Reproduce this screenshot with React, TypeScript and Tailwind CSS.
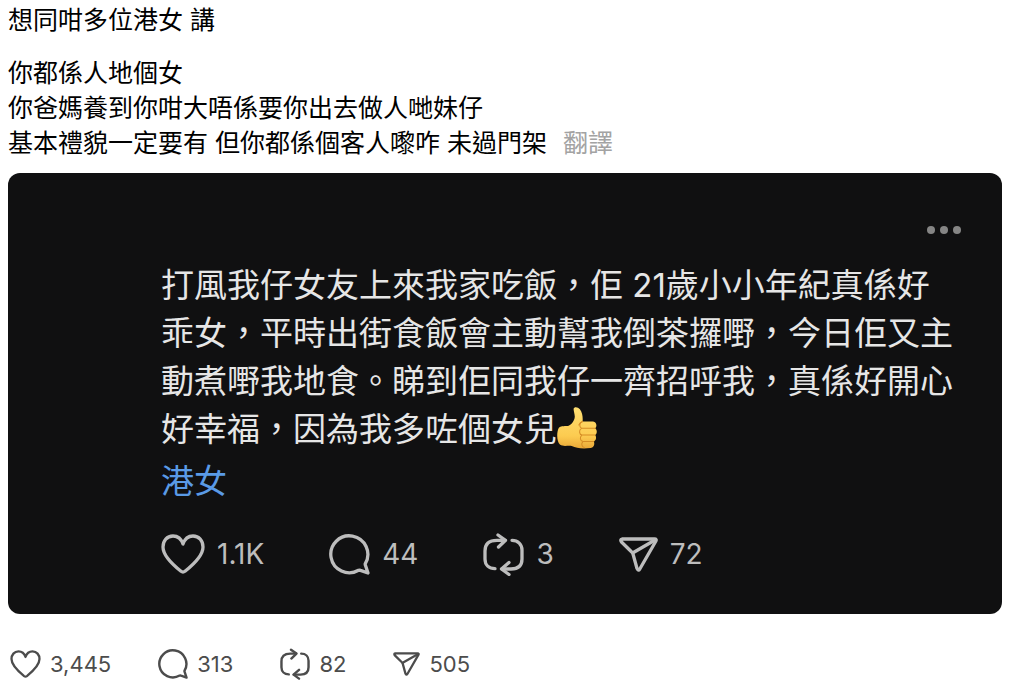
import type { ReactNode } from 'react';
import { clsx } from 'clsx';

type IconName = 'heart' | 'comment' | 'repost' | 'send';

interface Stat {
  icon: IconName;
  label: string;
  value: string;
}

const quotedStats: Stat[] = [
  { icon: 'heart', label: '讚好', value: '1.1K' },
  { icon: 'comment', label: '回覆', value: '44' },
  { icon: 'repost', label: '轉發', value: '3' },
  { icon: 'send', label: '分享', value: '72' },
];

const postStats: Stat[] = [
  { icon: 'heart', label: '讚好', value: '3,445' },
  { icon: 'comment', label: '回覆', value: '313' },
  { icon: 'repost', label: '轉發', value: '82' },
  { icon: 'send', label: '分享', value: '505' },
];

const icons: Record<IconName, { viewBox: string; shape: ReactNode }> = {
  heart: {
    viewBox: '0 0 44 40',
    shape: (
      <path d="M22 10C20.300 5 16.500 2 12 2C6 2 2 6.800 2 13C2 21 9 28.500 20 37.300Q22 38.800 24 37.300C35 28.500 42 21 42 13C42 6.800 38 2 32 2C27.500 2 23.700 5 22 10Z" />
    ),
  },
  comment: {
    viewBox: '0 0 41 41',
    shape: (
      <path d="M36.300 29.600A18.500 18.500 0 1 0 29.600 36.300Q30.500 36 31.500 36.400L39 39L36.500 31.500Q36 30.500 36.300 29.600Z" />
    ),
  },
  repost: {
    viewBox: '0 0 41 43',
    shape: (
      <>
        <path d="M22 7.300H14C6 7.300 2 11 2 18V26C2 32 6 35.700 12 35.700" />
        <path d="M15 2L22.500 7.300L15.500 14" />
        <path d="M29 7.300C35 7.300 39 11.500 39 17V26C39 32.500 35 36 28 36H19" />
        <path d="M26 29.500L18.500 36L26 41.500" />
      </>
    ),
  },
  send: {
    viewBox: '0 0 39 35',
    shape: (
      <>
        <path d="M3 2H35.500Q38 2 36.800 4.200L20.800 32Q19.200 34.500 18 31.500L14 17Q13.700 15.800 12.700 15L2.500 5Q.800 2.400 3 2Z" />
        <path d="M14 15.800L36.500 2.800" />
      </>
    ),
  },
};

function Icon({ name, className }: { name: IconName; className: string }) {
  const { viewBox, shape } = icons[name];
  return (
    <svg
      viewBox={viewBox}
      className={className}
      fill="none"
      stroke="currentColor"
      strokeWidth="3.300"
      strokeLinecap="round"
      strokeLinejoin="round"
      aria-hidden="true"
    >
      {shape}
    </svg>
  );
}

function StatBar({ stats, large }: { stats: Stat[]; large?: boolean }) {
  return (
    <div className={clsx('flex items-center', large ? 'gap-[65px] text-[#bdbdbd]' : 'gap-[47px] pl-0.5 text-[#4c4c4c]')}>
      {stats.map((stat) => (
        <button
          key={stat.icon}
          type="button"
          aria-label={`${stat.label} ${stat.value}`}
          className={clsx('flex items-center', large ? 'gap-3 text-[28px] leading-11' : 'gap-[9px] text-[22px] leading-8')}
        >
          <Icon name={stat.icon} className={large ? iconSizeLarge[stat.icon] : iconSize[stat.icon]} />
          {stat.value}
        </button>
      ))}
    </div>
  );
}

const iconSizeLarge: Record<IconName, string> = {
  heart: 'h-10 w-11',
  comment: 'h-[41px] w-[41px]',
  repost: 'h-[43px] w-[41px]',
  send: 'h-[35px] w-[39px]',
};

const iconSize: Record<IconName, string> = {
  heart: 'h-7 w-[31px]',
  comment: 'h-[30px] w-[30px]',
  repost: 'h-8 w-[30px]',
  send: 'h-6 w-[27px]',
};

function ThumbsUp() {
  return (
    <svg viewBox="0 0 117 124" className="inline-block h-[42px] w-10 align-[-8px]" role="img" aria-label="讚">
      <defs>
        <linearGradient id="skin" x1="0" y1="0" x2="0" y2="1">
          <stop offset="0" stopColor="#ffdf72" />
          <stop offset=".7" stopColor="#fccb50" />
          <stop offset="1" stopColor="#e9a838" />
        </linearGradient>
      </defs>
      <path
        fill="url(#skin)"
        d="M5 61C13 54 24 57 34 55C44 51 51 40 52 29C52 20 47 9 49 4C52-2 62 0 67 7C75 18 76 31 75 43H106C116 44 119 57 112 63C119 68 118 79 112 83C117 89 115 99 108 102C112 110 108 120 99 121C75 124 57 122 43 115C31 113 18 118 8 111C-2 101-2 73 5 61Z"
      />
      <g fill="none" stroke="#d58c25" strokeWidth="3" strokeLinecap="round">
        <path d="M75 43C65 46 64 58 72 63H112M72 63C63 68 65 81 73 83H112M73 83C66 89 67 99 76 102H108M76 102C70 108 72 117 80 120" />
        <path d="M75 43C70 45 66 48 64 53" />
      </g>
    </svg>
  );
}

function QuotedPost() {
  return (
    <article className="mt-3 rounded-xl bg-[#101011] pt-[52px] pr-[41px] pb-[38px] pl-[153px]">
      <div className="flex justify-end">
        <button type="button" aria-label="更多" className="flex h-2.5 items-center gap-[5px]">
          <span className="size-2 rounded-full bg-[#858585]" />
          <span className="size-2 rounded-full bg-[#858585]" />
          <span className="size-2 rounded-full bg-[#858585]" />
        </button>
      </div>
      <p className="mt-[26px] text-[33px] leading-12 text-[#e6e6e6]">
        打風我仔女友上來我家吃飯，佢 21歲小小年紀真係好
        <br />
        乖女，平時出街食飯會主動幫我倒茶攞嘢，今日佢又主
        <br />
        動煮嘢我地食。睇到佢同我仔一齊招呼我，真係好開心
        <br />
        好幸福，因為我多咗個女兒
        <ThumbsUp />
      </p>
      <a href="#topic" className="mt-1 inline-block text-[33px] leading-12 text-[#5a9ae6]">
        港女
      </a>
      <div className="mt-[27px]">
        <StatBar stats={quotedStats} large />
      </div>
    </article>
  );
}

export default function App() {
  return (
    <main
      lang="zh-HK"
      className="min-h-screen bg-white pt-[3px] pr-[22px] pl-2 font-[Inter,'Noto_Sans_CJK_TC',sans-serif] text-black"
    >
      <div className="text-[25px] leading-[35px]">
        <p>想同咁多位港女 講</p>
        <p className="mt-[18px]">
          你都係人地個女
          <br />
          你爸媽養到你咁大唔係要你出去做人哋妹仔
          <br />
          基本禮貌一定要有 但你都係個客人嚟咋 未過門架
          <button type="button" className="ml-4 text-[#a3a3a3]">
            翻譯
          </button>
        </p>
      </div>
      <QuotedPost />
      <div className="mt-[34px]">
        <StatBar stats={postStats} />
      </div>
    </main>
  );
}
